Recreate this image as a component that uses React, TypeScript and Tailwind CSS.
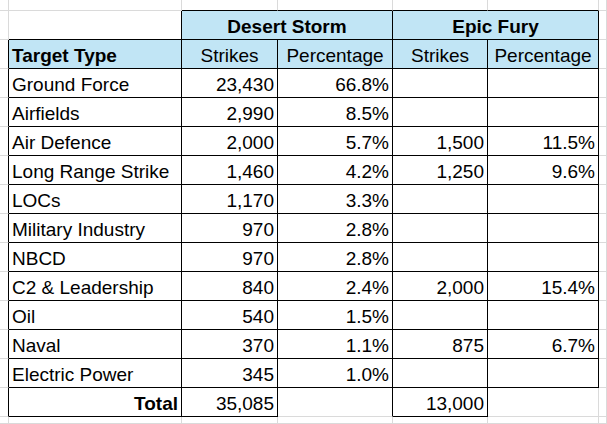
import React from 'react';
import clsx from 'clsx';

type Row = { type: string; ds?: string; dsPct?: string; ef?: string; efPct?: string };

const rows: Row[] = [
  { type: 'Ground Force', ds: '23,430', dsPct: '66.8%' },
  { type: 'Airfields', ds: '2,990', dsPct: '8.5%' },
  { type: 'Air Defence', ds: '2,000', dsPct: '5.7%', ef: '1,500', efPct: '11.5%' },
  { type: 'Long Range Strike', ds: '1,460', dsPct: '4.2%', ef: '1,250', efPct: '9.6%' },
  { type: 'LOCs', ds: '1,170', dsPct: '3.3%' },
  { type: 'Military Industry', ds: '970', dsPct: '2.8%' },
  { type: 'NBCD', ds: '970', dsPct: '2.8%' },
  { type: 'C2 & Leadership', ds: '840', dsPct: '2.4%', ef: '2,000', efPct: '15.4%' },
  { type: 'Oil', ds: '540', dsPct: '1.5%' },
  { type: 'Naval', ds: '370', dsPct: '1.1%', ef: '875', efPct: '6.7%' },
  { type: 'Electric Power', ds: '345', dsPct: '1.0%' },
];

// grid row / grid col of a cell that carries a black box border
const boxed = (r: number, c: number) => {
  if (c < 1 || c > 5) return false;
  if (r === 1) return c > 1;
  if (r >= 2 && r <= 13) return true;
  if (r === 14) return c === 1 || c === 2 || c === 4;
  return false;
};

type CellProps = {
  r: number;
  c: number;
  span?: number;
  fill?: boolean;
  align?: 'left' | 'right' | 'center';
  bold?: boolean;
  children?: React.ReactNode;
};

function Cell({ r, c, span = 1, fill, align = 'left', bold, children }: CellProps) {
  const last = c + span - 1;
  const right = boxed(r, last) || boxed(r, last + 1);
  const bottom = boxed(r, c) || boxed(r + 1, c);
  return (
    <div
      className={clsx(
        'flex items-end border-r border-b pb-[3px] whitespace-nowrap overflow-hidden',
        span === 2 && 'col-span-2',
        right ? 'border-r-black' : 'border-r-[#dadada]',
        bottom ? 'border-b-black' : 'border-b-[#dadada]',
        fill && 'bg-[#c1e5f5]',
        bold && 'font-bold',
        align === 'left' && 'justify-start pl-[3px]',
        align === 'right' && 'justify-end pr-[3px]',
        align === 'center' && 'justify-center'
      )}
    >
      {children}
    </div>
  );
}

function Blank({ r, c }: { r: number; c: number }) {
  return <Cell r={r} c={c} />;
}

export default function App() {
  return (
    <div className="w-[607px] h-[424px] overflow-hidden bg-white text-black font-['Liberation_Sans',Arial,sans-serif] text-[19px] leading-[19px]">
      <div className="grid h-full grid-cols-[9px_173px_96px_115px_95px_111px_1fr] grid-rows-[11px_repeat(14,29px)_1fr]">
        {/* spacer row */}
        {[0, 1, 2, 3, 4, 5, 6].map((c) => (
          <Blank key={`t${c}`} r={0} c={c} />
        ))}

        {/* group header */}
        <Blank r={1} c={0} />
        <Blank r={1} c={1} />
        <Cell r={1} c={2} span={2} fill bold align="center">Desert Storm</Cell>
        <Cell r={1} c={4} span={2} fill bold align="center">Epic Fury</Cell>
        <Blank r={1} c={6} />

        {/* column header */}
        <Blank r={2} c={0} />
        <Cell r={2} c={1} fill bold>Target Type</Cell>
        <Cell r={2} c={2} fill align="center">Strikes</Cell>
        <Cell r={2} c={3} fill align="center">Percentage</Cell>
        <Cell r={2} c={4} fill align="center">Strikes</Cell>
        <Cell r={2} c={5} fill align="center">Percentage</Cell>
        <Blank r={2} c={6} />

        {rows.map((row, i) => {
          const r = i + 3;
          return (
            <React.Fragment key={row.type}>
              <Blank r={r} c={0} />
              <Cell r={r} c={1}>{row.type}</Cell>
              <Cell r={r} c={2} align="right">{row.ds}</Cell>
              <Cell r={r} c={3} align="right">{row.dsPct}</Cell>
              <Cell r={r} c={4} align="right">{row.ef}</Cell>
              <Cell r={r} c={5} align="right">{row.efPct}</Cell>
              <Blank r={r} c={6} />
            </React.Fragment>
          );
        })}

        {/* totals */}
        <Blank r={14} c={0} />
        <Cell r={14} c={1} bold align="right">Total</Cell>
        <Cell r={14} c={2} align="right">35,085</Cell>
        <Blank r={14} c={3} />
        <Cell r={14} c={4} align="right">13,000</Cell>
        <Blank r={14} c={5} />
        <Blank r={14} c={6} />

        {/* filler row */}
        {[0, 1, 2, 3, 4, 5, 6].map((c) => (
          <Blank key={`b${c}`} r={15} c={c} />
        ))}
      </div>
    </div>
  );
}
